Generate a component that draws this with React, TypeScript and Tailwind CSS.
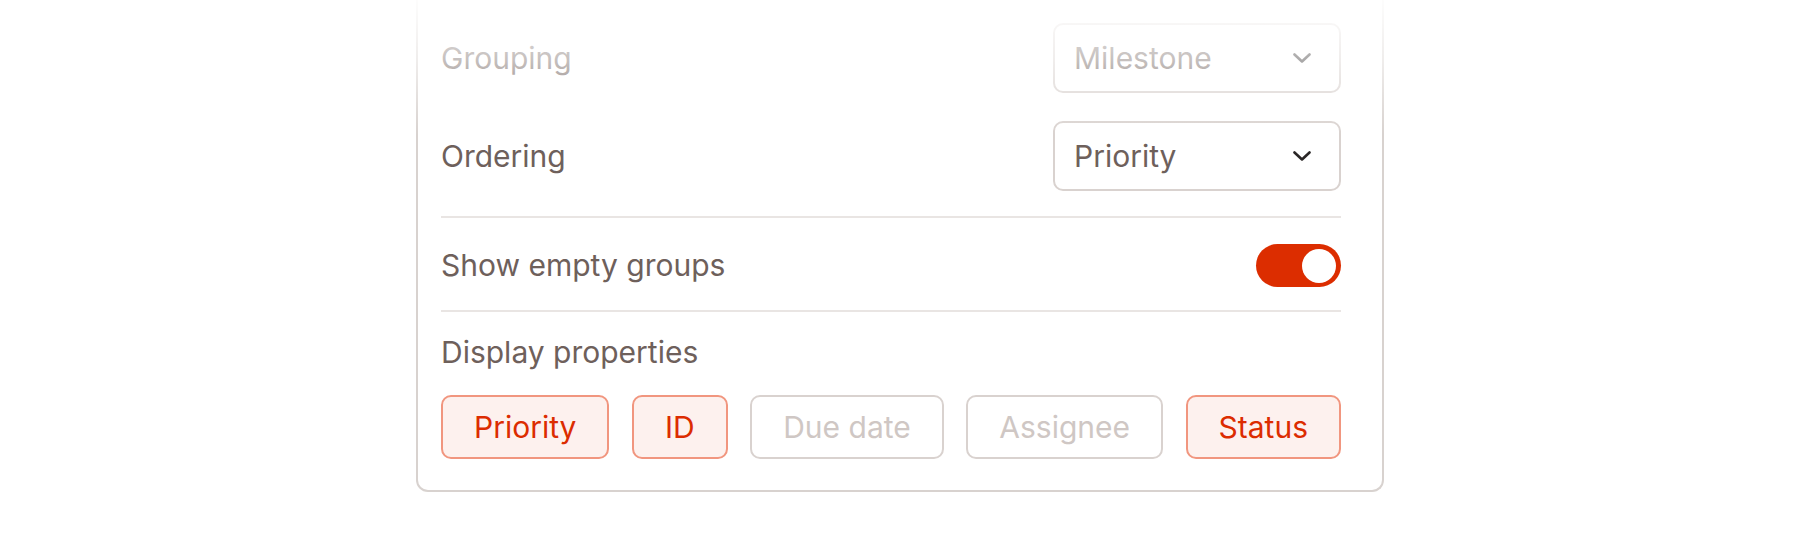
import React from "react";

function Chevron({ color }: { color: string }) {
  return (
    <svg width="18" height="10" viewBox="0 0 18 10" fill="none">
      <path d="M1.5 1.5 L9 8.5 L16.5 1.5" stroke={color} strokeWidth="2.6" strokeLinecap="round" strokeLinejoin="round" />
    </svg>
  );
}

function Select({ value }: { value: string }) {
  return (
    <div className="flex h-[70px] w-[288px] items-center justify-between rounded-[10px] border-2 border-[#d9d2cf] bg-white pl-[19px] pr-[28px]">
      <span className="text-[30px] leading-none text-[#6e605b]">{value}</span>
      <Chevron color="#2a2626" />
    </div>
  );
}

function Chip({ label, active }: { label: string; active: boolean }) {
  return (
    <div
      className={
        active
          ? "flex h-[64px] items-center rounded-[10px] border-2 border-[#f1967f] bg-[#fdf1ee] px-[31px] text-[30px] leading-none text-[#dc2c00]"
          : "flex h-[64px] items-center rounded-[10px] border-2 border-[#d9d2cf] bg-white px-[31px] text-[30px] leading-none text-[#cfc7c4]"
      }
    >
      {label}
    </div>
  );
}

export default function App() {
  return (
    <div className="relative h-[550px] w-full overflow-hidden bg-white font-[Inter,sans-serif]">
      <div className="mx-auto w-[968px] rounded-b-[12px] border-2 border-t-0 border-[#d8d2cf] pb-[31px] pl-[23px] pr-[41px] pt-[23px]">
        <div className="flex h-[70px] items-center justify-between">
          <span className="text-[30px] text-[#6e605b]">Grouping</span>
          <Select value="Milestone" />
        </div>
        <div className="mt-[28px] flex h-[70px] items-center justify-between">
          <span className="text-[30px] text-[#6e605b]">Ordering</span>
          <Select value="Priority" />
        </div>
        <div className="mt-[25px] h-[2px] bg-[#e9e5e3]" />
        <div className="mt-[26px] flex h-[43px] items-center justify-between">
          <span className="text-[30px] text-[#6e605b]">Show empty groups</span>
          <div className="flex h-[43px] w-[85px] items-center justify-end rounded-full bg-[#dc2d00] pr-[5px]">
            <div className="h-[34px] w-[34px] rounded-full bg-white" />
          </div>
        </div>
        <div className="mt-[23px] h-[2px] bg-[#e9e5e3]" />
        <div className="mt-[22px] h-[36px] text-[30px] leading-[36px] text-[#6e605b]">Display properties</div>
        <div className="mt-[25px] flex justify-between">
          <Chip label="Priority" active />
          <Chip label="ID" active />
          <Chip label="Due date" active={false} />
          <Chip label="Assignee" active={false} />
          <Chip label="Status" active />
        </div>
      </div>
      <div className="pointer-events-none absolute left-0 top-0 h-[135px] w-full bg-linear-to-b from-white/95 via-white/60 via-45% to-white/0" />
    </div>
  );
}
